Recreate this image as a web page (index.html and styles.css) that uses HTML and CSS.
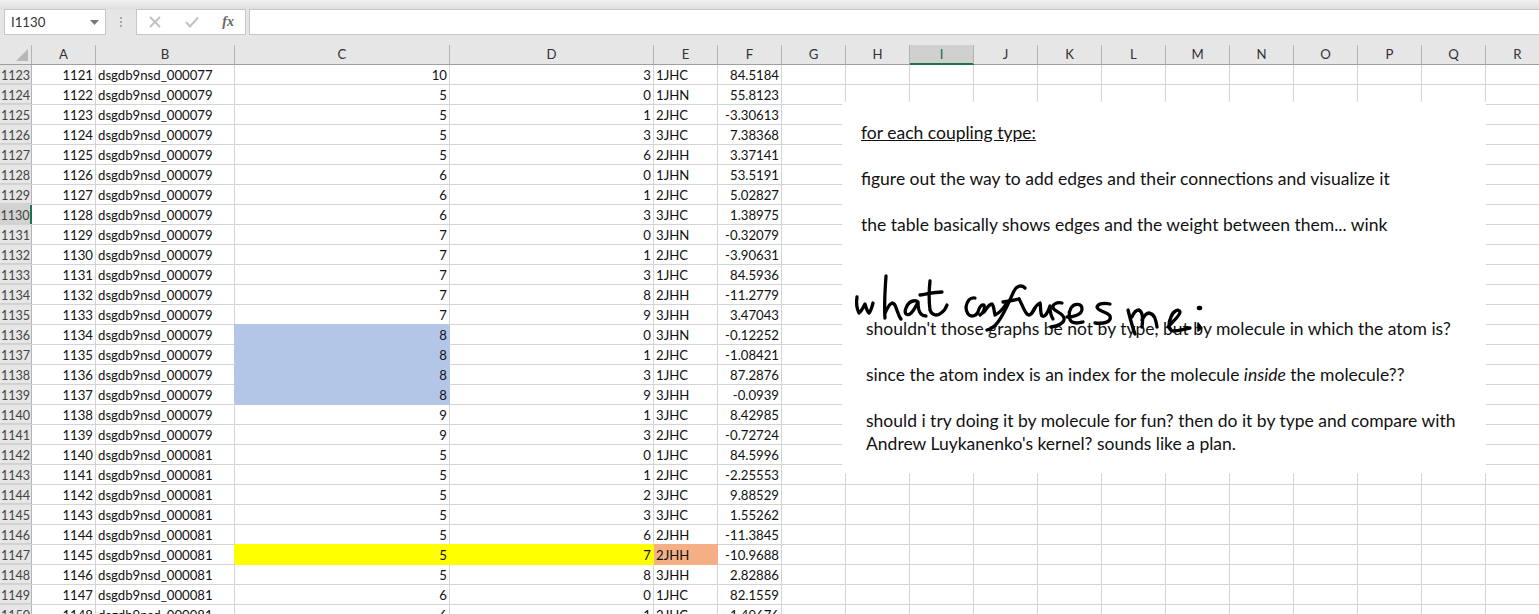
FILE: index.html
```html
<!DOCTYPE html>
<html lang="en">
<head>
<meta charset="utf-8">
<title>Sheet</title>
<link rel="stylesheet" href="styles.css">
</head>
<body>
<div class="formula-bar">
  <div class="name-box"><span>I1130</span><svg class="caret" width="9" height="5" viewBox="0 0 9 5"><path d="M0 0H9L4.5 5Z"/></svg></div>
  <div class="dots"><i></i><i></i><i></i></div>
  <div class="fx-box">
    <svg class="fx-icon" width="12" height="12" viewBox="0 0 12 12"><path d="M1 1L11 11M11 1L1 11"/></svg>
    <svg class="fx-icon" width="14" height="12" viewBox="0 0 14 12"><path d="M1 6L5 10.5L13 1.5"/></svg>
    <span class="fx">fx</span>
  </div>
  <div class="formula-input"></div>
</div>
<div class="sheet">
  <div class="row head">
    <div class="rh corner"><svg width="12" height="12" viewBox="0 0 12 12"><path d="M12 0V12H0Z"/></svg></div>
    <div>A</div><div>B</div><div>C</div><div>D</div><div>E</div><div>F</div><div>G</div><div>H</div><div class="sel">I</div><div>J</div><div>K</div><div>L</div><div>M</div><div>N</div><div>O</div><div>P</div><div>Q</div><div>R</div>
  </div>
  <div class="row"><div class="rh">1123</div><div class="n">1121</div><div>dsgdb9nsd_000077</div><div class="n">10</div><div class="n">3</div><div>1JHC</div><div class="n">84.5184</div></div>
  <div class="row"><div class="rh">1124</div><div class="n">1122</div><div>dsgdb9nsd_000079</div><div class="n">5</div><div class="n">0</div><div>1JHN</div><div class="n">55.8123</div></div>
  <div class="row"><div class="rh">1125</div><div class="n">1123</div><div>dsgdb9nsd_000079</div><div class="n">5</div><div class="n">1</div><div>2JHC</div><div class="n">-3.30613</div></div>
  <div class="row"><div class="rh">1126</div><div class="n">1124</div><div>dsgdb9nsd_000079</div><div class="n">5</div><div class="n">3</div><div>3JHC</div><div class="n">7.38368</div></div>
  <div class="row"><div class="rh">1127</div><div class="n">1125</div><div>dsgdb9nsd_000079</div><div class="n">5</div><div class="n">6</div><div>2JHH</div><div class="n">3.37141</div></div>
  <div class="row"><div class="rh">1128</div><div class="n">1126</div><div>dsgdb9nsd_000079</div><div class="n">6</div><div class="n">0</div><div>1JHN</div><div class="n">53.5191</div></div>
  <div class="row"><div class="rh">1129</div><div class="n">1127</div><div>dsgdb9nsd_000079</div><div class="n">6</div><div class="n">1</div><div>2JHC</div><div class="n">5.02827</div></div>
  <div class="row"><div class="rh cur">1130</div><div class="n">1128</div><div>dsgdb9nsd_000079</div><div class="n">6</div><div class="n">3</div><div>3JHC</div><div class="n">1.38975</div></div>
  <div class="row"><div class="rh">1131</div><div class="n">1129</div><div>dsgdb9nsd_000079</div><div class="n">7</div><div class="n">0</div><div>3JHN</div><div class="n">-0.32079</div></div>
  <div class="row"><div class="rh">1132</div><div class="n">1130</div><div>dsgdb9nsd_000079</div><div class="n">7</div><div class="n">1</div><div>2JHC</div><div class="n">-3.90631</div></div>
  <div class="row"><div class="rh">1133</div><div class="n">1131</div><div>dsgdb9nsd_000079</div><div class="n">7</div><div class="n">3</div><div>1JHC</div><div class="n">84.5936</div></div>
  <div class="row"><div class="rh">1134</div><div class="n">1132</div><div>dsgdb9nsd_000079</div><div class="n">7</div><div class="n">8</div><div>2JHH</div><div class="n">-11.2779</div></div>
  <div class="row"><div class="rh">1135</div><div class="n">1133</div><div>dsgdb9nsd_000079</div><div class="n">7</div><div class="n">9</div><div>3JHH</div><div class="n">3.47043</div></div>
  <div class="row"><div class="rh">1136</div><div class="n">1134</div><div>dsgdb9nsd_000079</div><div class="n blue">8</div><div class="n">0</div><div>3JHN</div><div class="n">-0.12252</div></div>
  <div class="row"><div class="rh">1137</div><div class="n">1135</div><div>dsgdb9nsd_000079</div><div class="n blue">8</div><div class="n">1</div><div>2JHC</div><div class="n">-1.08421</div></div>
  <div class="row"><div class="rh">1138</div><div class="n">1136</div><div>dsgdb9nsd_000079</div><div class="n blue">8</div><div class="n">3</div><div>1JHC</div><div class="n">87.2876</div></div>
  <div class="row"><div class="rh">1139</div><div class="n">1137</div><div>dsgdb9nsd_000079</div><div class="n blue">8</div><div class="n">9</div><div>3JHH</div><div class="n">-0.0939</div></div>
  <div class="row"><div class="rh">1140</div><div class="n">1138</div><div>dsgdb9nsd_000079</div><div class="n">9</div><div class="n">1</div><div>3JHC</div><div class="n">8.42985</div></div>
  <div class="row"><div class="rh">1141</div><div class="n">1139</div><div>dsgdb9nsd_000079</div><div class="n">9</div><div class="n">3</div><div>2JHC</div><div class="n">-0.72724</div></div>
  <div class="row"><div class="rh">1142</div><div class="n">1140</div><div>dsgdb9nsd_000081</div><div class="n">5</div><div class="n">0</div><div>1JHC</div><div class="n">84.5996</div></div>
  <div class="row"><div class="rh">1143</div><div class="n">1141</div><div>dsgdb9nsd_000081</div><div class="n">5</div><div class="n">1</div><div>2JHC</div><div class="n">-2.25553</div></div>
  <div class="row"><div class="rh">1144</div><div class="n">1142</div><div>dsgdb9nsd_000081</div><div class="n">5</div><div class="n">2</div><div>3JHC</div><div class="n">9.88529</div></div>
  <div class="row"><div class="rh">1145</div><div class="n">1143</div><div>dsgdb9nsd_000081</div><div class="n">5</div><div class="n">3</div><div>3JHC</div><div class="n">1.55262</div></div>
  <div class="row"><div class="rh">1146</div><div class="n">1144</div><div>dsgdb9nsd_000081</div><div class="n">5</div><div class="n">6</div><div>2JHH</div><div class="n">-11.3845</div></div>
  <div class="row"><div class="rh">1147</div><div class="n">1145</div><div>dsgdb9nsd_000081</div><div class="n yellow">5</div><div class="n yellow">7</div><div class="orange">2JHH</div><div class="n">-10.9688</div></div>
  <div class="row"><div class="rh">1148</div><div class="n">1146</div><div>dsgdb9nsd_000081</div><div class="n">5</div><div class="n">8</div><div>3JHH</div><div class="n">2.82886</div></div>
  <div class="row"><div class="rh">1149</div><div class="n">1147</div><div>dsgdb9nsd_000081</div><div class="n">6</div><div class="n">0</div><div>1JHC</div><div class="n">82.1559</div></div>
  <div class="row"><div class="rh">1150</div><div class="n">1148</div><div>dsgdb9nsd_000081</div><div class="n">6</div><div class="n">1</div><div>2JHC</div><div class="n">1.49676</div></div>

  <div class="note">
    <p class="u">for each coupling type:</p>
    <p>figure out the way to add edges and their connections and visualize it</p>
    <p>the table basically shows edges and the weight between them... wink</p>
    <div class="lower">
      <p>shouldn't those graphs be not by type, but by molecule in which the atom is?</p>
      <p>since the atom index is an index for the molecule <em>inside</em> the molecule??</p>
      <p>should i try doing it by molecule for fun? then do it by type and compare with<br>Andrew Luykanenko's kernel? sounds like a plan.</p>
    </div>
  </div>
  <svg class="ink" width="360" height="70" viewBox="850 272 360 70" fill="none" stroke="#000" stroke-width="3.3" stroke-linecap="round" stroke-linejoin="round">
    <path d="M857 297C856 303 857 309 859 313C862 311 863 307 865 304C866 308 867 311 869 313C871 311 872 307 873 303"/>
    <path d="M886 276C885 290 884 305 885 318"/>
    <path d="M885 313C887 309 889 304 892 303C896 303 896 309 898 313C899 316 900 318 901 319"/>
    <path d="M917 301C912 300 908 303 906 308C904 313 906 316 910 314C914 311 916 306 918 302C918 307 919 312 921 314C923 316 924 316 926 316"/>
    <path d="M930 281C929 290 929 302 930 310C932 316 938 316 941 313C944 311 946 308 947 305"/>
    <path d="M920 295C927 294 935 292 942 292"/>
    <path d="M975 298C970 297 967 301 966 307C966 313 969 316 972 316C975 316 977 314 978 312C979 308 981 304 984 305C985 308 984 313 980 315"/>
    <path d="M984 312C987 308 989 304 992 304C994 306 994 311 995 315C999 313 1003 309 1006 304"/>
    <path d="M1025 288C1022 285 1017 285 1014 291C1010 299 1006 311 998 322C995 326 991 329 987 330"/>
    <path d="M1003 302C1009 301 1015 300 1019 299"/>
    <path d="M1019 299C1022 304 1024 311 1027 314C1030 317 1033 312 1035 308"/>
    <path d="M1032 313C1034 309 1037 304 1040 303C1041 307 1040 313 1042 316C1045 318 1048 312 1050 306C1050 311 1051 316 1053 319"/>
    <path d="M1062 303C1057 302 1052 304 1053 308C1055 312 1063 313 1064 318C1065 323 1058 326 1051 327"/>
    <path d="M1067 317C1073 317 1082 315 1082 309C1082 303 1074 303 1071 308C1068 313 1069 320 1072 322C1076 324 1079 323 1083 322"/>
    <path d="M1110 304C1105 303 1098 303 1097 307C1097 311 1108 312 1110 316C1112 322 1104 324 1095 323"/>
    <path d="M1128 310C1130 318 1132 326 1135 334"/>
    <path d="M1132 317C1134 312 1136 310 1139 310C1143 312 1143 320 1142 327"/>
    <path d="M1142 320C1144 316 1146 313 1149 313C1155 314 1156 321 1157 327"/>
    <path d="M1168 327C1172 322 1180 316 1180 312C1179 308 1173 311 1171 317C1168 323 1168 330 1173 331C1178 331 1184 329 1190 328"/>
    <path d="M1199 308L1200 308" stroke-width="4.6"/>
    <path d="M1198 323L1202 328L1198 331Z" fill="#000" stroke-width="1.5"/>
  </svg>
</div>
</body>
</html>
```
FILE: styles.css
```css
* { box-sizing: border-box; }
html, body { margin: 0; height: 100%; overflow: hidden; }
body {
  background: #fff;
  font-family: "Lato", "Open Sans", sans-serif;
  font-size: 13.2px;
  color: #111;
  width: 1539px;
  height: 614px;
}
.formula-bar {
  height: 45px;
  padding: 9px 0 10px 4px;
  display: flex;
  align-items: stretch;
  background: linear-gradient(#f1f1f1 0, #dedede 9px, #e6e6e6 10px);
}
.name-box {
  width: 102px;
  background: #fff;
  border: 1px solid #c6c6c6;
  display: flex;
  align-items: center;
  justify-content: space-between;
  padding: 0 6px 0 6px;
  color: #333;
}
.caret path { fill: #777; }
.dots {
  width: 30px;
  display: flex;
  flex-direction: column;
  align-items: center;
  justify-content: center;
  gap: 2px;
}
.dots i { width: 2px; height: 2px; background: #a8a8a8; }
.fx-box {
  width: 110px;
  background: #fff;
  border: 1px solid #c6c6c6;
  display: flex;
  align-items: center;
  justify-content: space-between;
  padding: 0 11px 0 12px;
}
.fx-icon path { fill: none; stroke: #c2c2c2; stroke-width: 2; }
.fx { font: italic bold 14px "Liberation Serif", serif; color: #666; }
.formula-input {
  flex: 1;
  margin-left: 3px;
  background: #fff;
  border: 1px solid #c6c6c6;
  border-right: 0;
}
.sheet { position: relative; height: 569px; overflow: hidden; }
.row {
  display: grid;
  grid-template-columns: 32px 64px 139px 215px 204px 64px 64px;
  height: 20px;
  line-height: 19px;
  border-bottom: 1px solid #d4d4d4;
  background: repeating-linear-gradient(90deg, #fff 0 63px, #d4d4d4 63px 64px) 782px 0 / 100% 100% no-repeat;
}
.row > div {
  border-right: 1px solid #d4d4d4;
  padding: 1px 1px 0 2px;
  white-space: nowrap;
  overflow: hidden;
}
.row > .n { text-align: right; padding-right: 2px; }
.row > .rh {
  background: #e6e6e6;
  border-right: 1px solid #b4b4b4;
  padding: 1px 0 0;
  text-align: center;
  font-size: 12.6px;
  color: #444;
  box-shadow: inset 0 -1px 0 #d0d0d0;
}
.row > .rh.cur { background: #d2d2d2; border-right: 2px solid #217346; }
.row > .blue { background: #b4c6e7; border-right-color: #b4c6e7; box-shadow: -1px -1px 0 #b4c6e7, 0 1px 0 #b4c6e7; }
.row > .yellow { background: #ffff00; border-right-color: #ffff00; box-shadow: -1px -1px 0 #ffff00, 0 1px 0 #ffff00; }
.row > .orange { background: #f4b084; border-right-color: #f4b084; box-shadow: 0 -1px 0 #f4b084, 0 1px 0 #f4b084; position: relative; }
.row.head {
  grid-template-columns: 32px 64px 139px 215px 204px 64px 64px repeat(12, 64px);
  background: #e6e6e6;
  border-bottom: 1px solid #9f9f9f;
  color: #333;
}
.row.head > div {
  text-align: center;
  padding: 0;
  border-right: 1px solid #b4b4b4;
}
.row.head > .sel { background: #d0d0d0; color: #1f6b42; box-shadow: inset 0 -1px 0 #217346, 0 1px 0 #217346; position: relative; }
.row.head > .corner { box-shadow: none; padding: 4px 0 0 16px; text-align: left; line-height: 0; }
.corner path { fill: #b8b8b8; }
.note {
  position: absolute;
  left: 842px;
  top: 57px;
  width: 644px;
  height: 371px;
  background: #fff;
  padding: 19px 0 0 19px;
  font-size: 17.5px;
  line-height: 23px;
  color: #111;
}
.note p { margin: 0 0 23px; white-space: nowrap; }
.note .u { text-decoration: underline; }
.lower { margin-top: 81px; padding-left: 5px; }
.ink { position: absolute; left: 850px; top: 227px; overflow: visible; }
```
